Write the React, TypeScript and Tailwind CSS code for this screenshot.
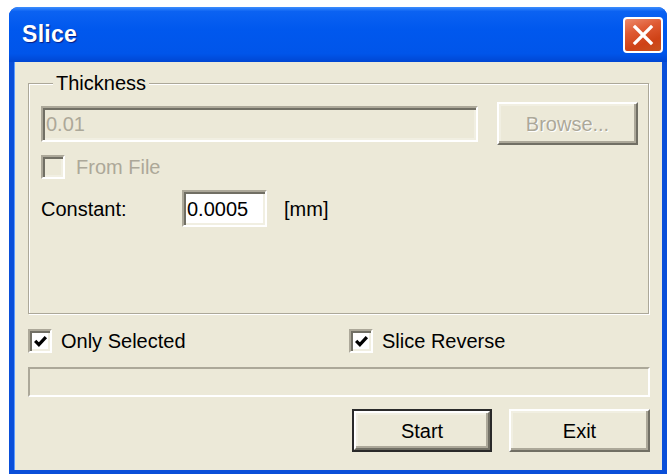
const sans = "font-['Liberation_Sans',Arial,sans-serif]";

const raised =
  "border-2 border-t-white border-l-white border-r-[#716f64] border-b-[#716f64] shadow-[inset_-2px_-2px_0_#aca899,inset_2px_2px_0_#f1efe2] bg-[#ece9d8]";

const sunken =
  "border-2 border-t-[#aca899] border-l-[#aca899] border-r-white border-b-white shadow-[inset_2px_2px_0_#716f64,inset_-2px_-2px_0_#f1efe2]";

function CheckBox({ checked, disabled }: { checked?: boolean; disabled?: boolean }) {
  return (
    <span
      className={`flex h-[24px] w-[24px] shrink-0 items-center justify-center ${sunken} ${
        disabled ? "bg-[#ece9d8]" : "bg-white"
      }`}
    >
      {checked && (
        <svg width="15" height="15" viewBox="0 0 14 14">
          <path d="M2 6.5 L5.5 10 L12 3" fill="none" stroke="#000" strokeWidth="3" />
        </svg>
      )}
    </span>
  );
}

function Button({ label, disabled, primary }: { label: string; disabled?: boolean; primary?: boolean }) {
  const inner = (
    <div
      className={`flex h-full w-full items-center justify-center ${raised} ${
        disabled ? "text-[#aca899] [text-shadow:1px_1px_0_#fff]" : "text-black"
      }`}
    >
      {label}
    </div>
  );
  if (primary) {
    return <div className="h-[43px] w-[140px] border-2 border-[#2a2a2a]">{inner}</div>;
  }
  return <div className="h-[43px] w-[141px]">{inner}</div>;
}

export default function App() {
  return (
    <div className={`h-[474px] w-[670px] overflow-hidden bg-white pl-[9px] pt-[7px] ${sans}`}>
      <div className="flex h-[467px] w-[658px] flex-col rounded-t-[9px] bg-[#0a4fd9]">
        {/* caption */}
        <div className="flex h-[55px] shrink-0 items-center justify-between rounded-t-[9px] bg-[linear-gradient(#3d8efd_0%,#0b62f2_8%,#0058ee_40%,#0055ea_85%,#0046d2_100%)] pl-[13px] pr-[4px]">
          <span className="text-[23px] font-bold tracking-[0.3px] text-white [text-shadow:1px_1px_1px_#0a1e82]">
            Slice
          </span>
          <div className="flex h-[36px] w-[40px] items-center justify-center rounded-[4px] border-2 border-white bg-[linear-gradient(160deg,#ec8a6c_0%,#df5a33_35%,#cf4216_70%,#c8531f_100%)]">
            <svg width="22" height="22" viewBox="0 0 22 22">
              <path d="M3 3 L19 19 M19 3 L3 19" stroke="#fff" strokeWidth="3.2" strokeLinecap="square" />
            </svg>
          </div>
        </div>

        {/* client area */}
        <div className="mx-[5px] mb-[4px] flex flex-1 flex-col border-l border-[#5b9bff] bg-[#ece9d8] pl-[13px] pr-[12px] text-[20px] text-black">
          <fieldset className="mt-[9px] mr-[1px] border border-[#aca899] pb-[86px] pl-[12px] pr-[10px] shadow-[1px_1px_0_#fff,inset_1px_1px_0_#fff]">
            <legend className="ml-[12px] bg-[#ece9d8] px-[3px] leading-[24px]">Thickness</legend>
            <div className="mt-[7px] flex h-[43px] items-center gap-[19px]">
              <div className={`flex h-[36px] flex-1 items-center pl-[3px] text-[#aca899] ${sunken} bg-[#ece9d8]`}>
                0.01
              </div>
              <Button label="Browse..." disabled />
            </div>
            <div className="mt-[7px] flex items-center gap-[11px]">
              <CheckBox disabled />
              <span className="text-[#aca899]">From File</span>
            </div>
            <div className="mt-[8px] flex items-center">
              <span className="w-[141px]">Constant:</span>
              <div className={`flex h-[37px] w-[85px] items-center bg-white pl-[3px] ${sunken}`}>0.0005</div>
              <span className="ml-[17px]">[mm]</span>
            </div>
          </fieldset>

          <div className="mt-[12px] flex items-center">
            <div className="flex w-[321px] items-center gap-[9px]">
              <CheckBox checked />
              <span>Only Selected</span>
            </div>
            <div className="flex items-center gap-[9px]">
              <CheckBox checked />
              <span>Slice Reverse</span>
            </div>
          </div>

          <div className="mt-[11px] h-[30px] border-2 border-t-[#aca899] border-l-[#aca899] border-r-white border-b-white" />

          <div className="mt-[12px] flex justify-end gap-[17px]">
            <Button label="Start" primary />
            <Button label="Exit" />
          </div>
        </div>
      </div>
    </div>
  );
}
